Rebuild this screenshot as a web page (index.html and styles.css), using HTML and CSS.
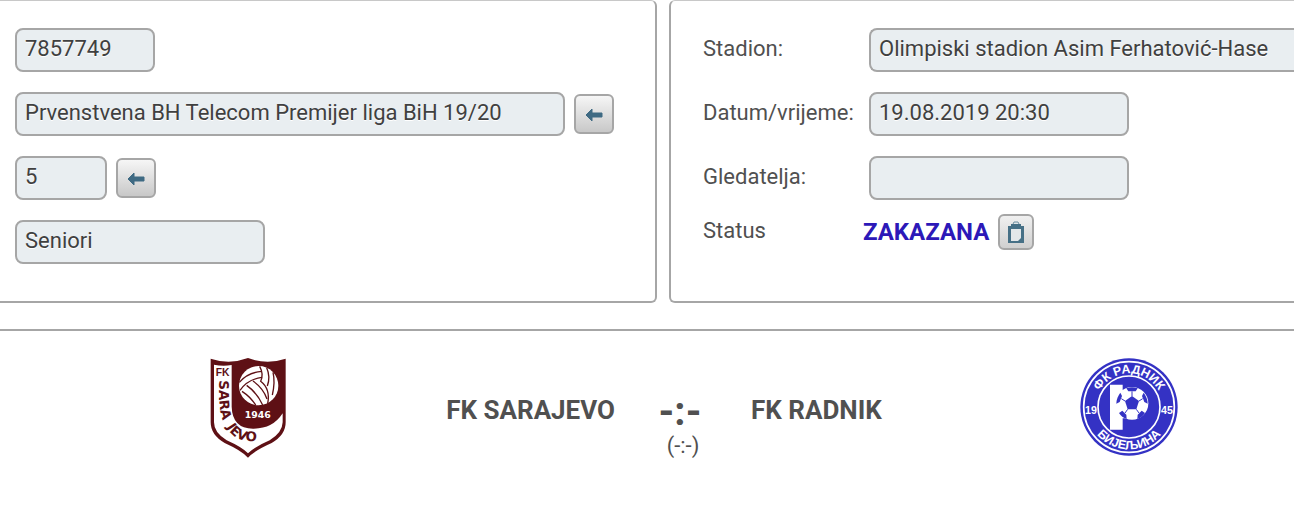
FILE: index.html
```html
<!DOCTYPE html>
<html lang="bs">
<head>
  <meta charset="UTF-8" />
  <title>FK Sarajevo - FK Radnik</title>
  <meta name="viewport" content="width=device-width, initial-scale=1" />
  <link rel="stylesheet" href="styles.css">
</head>
<body>
  <form class="panels">
    <section class="panel panel-left">
      <div class="row">
        <input class="field w-id" type="text" value="7857749" aria-label="Broj utakmice" readonly />
      </div>
      <div class="row">
        <input class="field w-league" type="text" value="Prvenstvena BH Telecom Premijer liga BiH 19/20" aria-label="Takmičenje" readonly />
        <button type="button" class="icon-btn" aria-label="Takmičenje">
          <svg width="18" height="14" viewBox="0 0 18 14"><path d="M1 7 L7 1 V5 H17 V9 H7 V13 Z" fill="#3f6a83" stroke="#3f6a83" stroke-linejoin="round"/></svg>
        </button>
      </div>
      <div class="row">
        <input class="field w-round" type="text" value="5" aria-label="Kolo" readonly />
        <button type="button" class="icon-btn" aria-label="Kolo">
          <svg width="18" height="14" viewBox="0 0 18 14"><path d="M1 7 L7 1 V5 H17 V9 H7 V13 Z" fill="#3f6a83" stroke="#3f6a83" stroke-linejoin="round"/></svg>
        </button>
      </div>
      <div class="row">
        <input class="field w-category" type="text" value="Seniori" aria-label="Kategorija" readonly />
      </div>
    </section>

    <section class="panel panel-right">
      <div class="row">
        <label for="stadium">Stadion:</label>
        <input class="field w-stadium" id="stadium" type="text" value="Olimpiski stadion Asim Ferhatović-Hase" readonly />
      </div>
      <div class="row">
        <label for="date">Datum/vrijeme:</label>
        <input class="field w-date" id="date" type="text" value="19.08.2019 20:30" readonly />
      </div>
      <div class="row">
        <label for="crowd">Gledatelja:</label>
        <input class="field w-date" id="crowd" type="text" value="" readonly />
      </div>
      <div class="row status-row">
        <span class="status-label">Status</span>
        <strong class="status">ZAKAZANA</strong>
        <button type="button" class="icon-btn small" aria-label="Status">
          <svg width="18" height="24" viewBox="0 0 18 24">
            <path d="M5 6 L7 2 H11 L13 6 Z" fill="#dfe5e8" stroke="#6d8fa0" stroke-width="1"/>
            <path d="M1 6 H4 V4 H14 V6 H17 V23 H1 Z" fill="#467086"/>
            <path d="M4 9 H14 V18 L11 21 H4 Z" fill="#e3e7e9"/>
          </svg>
        </button>
      </div>
    </section>
  </form>

  <section class="match">
    <div class="team home">
      <svg class="crest-home" viewBox="45 36 232 303" role="img" aria-label="FK Sarajevo">
        <path d="M49 41 Q105 60 161 39 Q217 60 274 41 V232 Q274 270 232 294 Q180 317 161 338 Q142 317 91 294 Q49 270 49 232 Z" fill="#5e1015"/>
        <path d="M59 59 Q86 65 112 60 V185 Q114 250 176 251 Q235 252 265 205 V232 Q264 263 226 286 Q180 306 161 325 Q142 306 97 286 Q59 263 59 232 Z" fill="#fff"/>
        <circle cx="193" cy="122" r="59" fill="#fff"/>
        <g fill="none" stroke="#5e1015" stroke-width="4">
          <path d="M135 112 Q160 82 203 79"/>
          <path d="M137 136 Q160 103 203 97"/>
          <path d="M196 64 Q209 88 199 109 Q229 132 220 176"/>
          <path d="M217 68 Q229 95 219 123"/>
          <path d="M236 82 Q243 110 234 150"/>
          <path d="M157 121 Q187 142 205 180"/>
          <path d="M143 139 Q168 155 184 180"/>
          <path d="M176 108 Q207 130 218 162"/>
        </g>
        <text class="crest-year" x="151" y="218">1946</text>
        <text class="crest-fk" x="64" y="94">FK</text>
        <path id="sarajevoSide" d="M75 106 V166 Q76 205 90 236" fill="none"/>
        <path id="sarajevoBottom" d="M97 246 Q118 284 160 288 Q190 291 225 280" fill="none"/>
        <text class="crest-name"><textPath href="#sarajevoSide">SARA</textPath></text>
        <text class="crest-name"><textPath href="#sarajevoBottom">JEVO</textPath></text>
      </svg>
      <h2>FK SARAJEVO</h2>
    </div>
    <div class="score">
      <div class="result">-:-</div>
      <div class="halftime">(-:-)</div>
    </div>
    <div class="team away">
      <h2>FK RADNIK</h2>
      <svg class="crest-away" viewBox="31 25 294 294" role="img" aria-label="ФК Радник Бијељина">
        <circle cx="178" cy="172" r="146" fill="#3432c4"/>
        <circle cx="178" cy="172" r="136" fill="none" stroke="#fff" stroke-width="5"/>
        <circle cx="178" cy="172" r="93" fill="none" stroke="#fff" stroke-width="5"/>
        <path d="M121 105 H159 V122 H180 V206 H159 V240 H121 Z" fill="#fff"/>
        <circle cx="187" cy="161" r="49" fill="#fff"/>
        <g fill="#3432c4">
          <path d="M187 139 L208 154 L200 179 H174 L166 154 Z"/>
          <path d="M170 116 Q187 109 204 116 L198 125 H176 Z"/>
          <path d="M222 129 Q234 145 234 162 L224 157 L217 139 Z"/>
          <path d="M226 190 Q218 203 203 208 L204 195 L216 183 Z"/>
          <path d="M171 208 Q156 203 148 190 L158 183 L170 195 Z"/>
          <path d="M140 162 Q140 145 152 129 L157 139 L150 157 Z"/>
        </g>
        <path d="M187 139 V125 M208 154 L219 147 M200 179 L208 190 M174 179 L166 190 M166 154 L155 147" stroke="#3432c4" stroke-width="3"/>
        <path id="radnikTop" d="M77 172 A101 101 0 0 1 279 172" fill="none"/>
        <path id="radnikBottom" d="M51 172 A127 127 0 0 0 305 172" fill="none"/>
        <text class="crest-ring"><textPath href="#radnikTop" startOffset="50%">ФК РАДНИК</textPath></text>
        <text class="crest-ring"><textPath href="#radnikBottom" startOffset="50%">БИЈЕЉИНА</textPath></text>
        <text class="crest-since" x="64" y="193">19</text>
        <text class="crest-since" x="292" y="193">45</text>
      </svg>
    </div>
  </section>
</body>
</html>
```
FILE: styles.css
```css
* { box-sizing: border-box; }
body { margin: 0; background: #fff; color: #505050; font: 22px/28px Roboto, sans-serif; overflow-x: hidden; }

/* match info panels */
.panels { display: grid; grid-template-columns: 657fr 625fr; gap: 12px; }
.panel { border: 2px solid #a6a6a6; border-top: 1px solid #c8c8c8; padding: 27px 0 37px; min-width: 0; }
.panel-left { border-left: none; border-radius: 0 6px 6px 0; padding-left: 15px; }
.panel-right { border-right: none; border-radius: 6px 0 0 6px; padding-left: 32px; }
.row { display: flex; align-items: center; gap: 9px; margin-bottom: 20px; }
.row:last-child { margin-bottom: 0; }
.row label { width: 157px; padding-bottom: 2px; white-space: nowrap; }
.field {
  height: 44px; padding: 0 8px 4px; border: 2px solid #a6a6a6; border-radius: 8px;
  background: #e9eef1; color: #404040; font: inherit; text-shadow: 0 1px 0 #fff;
}
.w-id { width: 140px; }
.w-league { width: 550px; }
.w-round { width: 92px; }
.w-category { width: 250px; }
.w-date { width: 260px; }
.w-stadium { flex: 1; min-width: 0; border-right: none; border-radius: 8px 0 0 8px; }
.icon-btn {
  display: flex; align-items: center; justify-content: center; width: 40px; height: 40px; padding: 2px 0 0;
  border: 2px solid #a6a6a6; border-radius: 6px; background: linear-gradient(#f6f6f6, #c8c8c8); cursor: pointer;
}
.icon-btn.small { width: 36px; height: 36px; padding: 0; background: linear-gradient(#f0f0f0, #d0d0d0); }
.icon-btn svg { flex: none; }
.status-row { margin-top: -6px; }
.status-label { width: 151px; padding-bottom: 2px; }
.status { color: #2c18b8; font-size: 24px; }

/* teams and score */
.match { display: grid; grid-template-columns: 615fr 136px 543fr; margin-top: 26px; padding-top: 25px; border-top: 2px solid #a6a6a6; }
.team { display: flex; align-items: center; justify-content: space-between; height: 102px; }
.home { padding-left: 34%; }
.away { padding-right: 116px; }
.team h2 { margin: 0; padding-top: 6px; font-size: 26px; }
.crest-home { width: 78px; height: 101px; }
.crest-away { width: 98px; height: 98px; }
.score { padding-top: 36px; text-align: center; }
.result { padding-right: 6px; font-size: 40px; font-weight: bold; line-height: 40px; }
.halftime { font-size: 22px; }

/* lettering inside the crests */
.crest-fk { font: bold 31px "Liberation Sans", sans-serif; fill: #5e1015; }
.crest-year { font: bold 28px "DejaVu Sans", sans-serif; fill: #fff; }
.crest-name { font: bold 40px "DejaVu Sans", sans-serif; fill: #5e1015; }
.crest-ring { font: bold 37px "Liberation Sans", sans-serif; fill: #fff; text-anchor: middle; }
.crest-since { font: bold 32px "Liberation Sans", sans-serif; fill: #fff; text-anchor: middle; }
```
